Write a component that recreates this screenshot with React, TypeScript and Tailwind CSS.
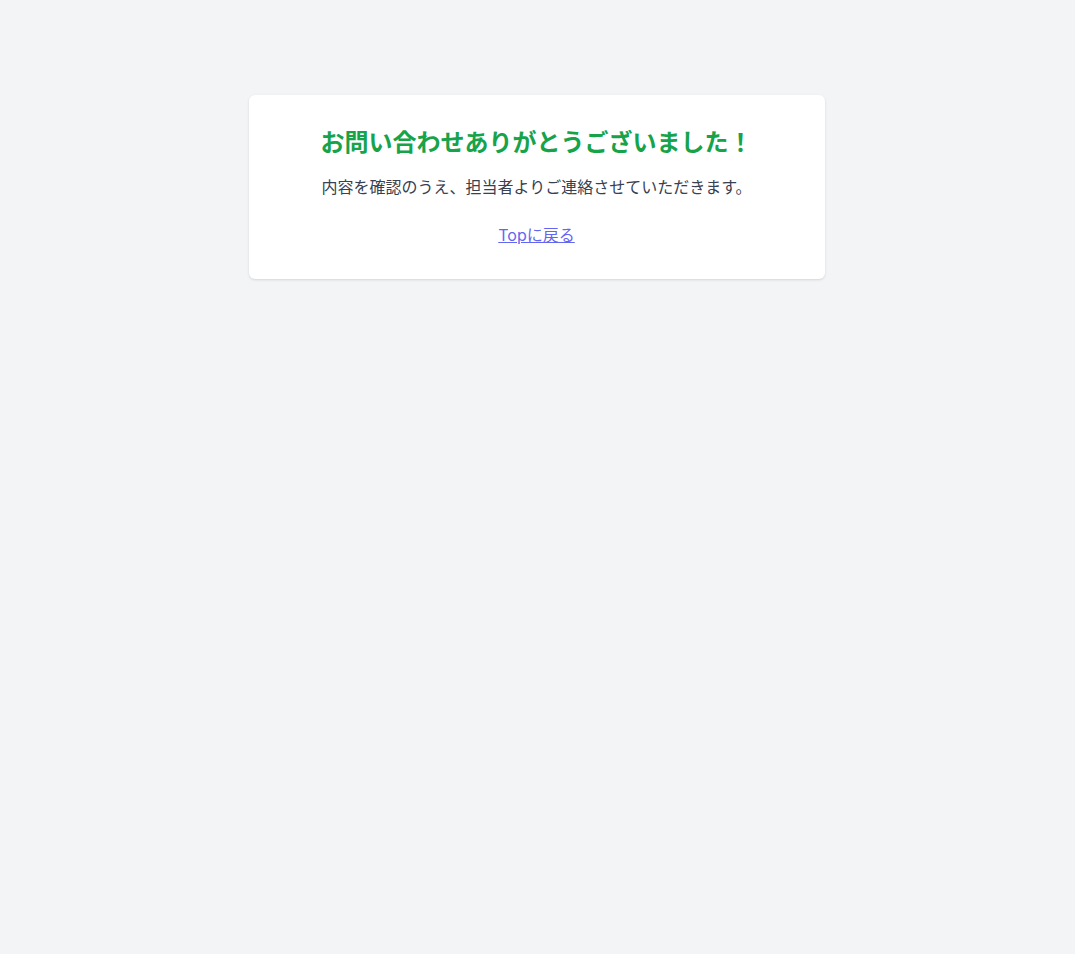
export default function App() {
  return (
    <div
      className="min-h-screen bg-[#f3f4f6] pt-[95px] px-4"
      style={{ fontFamily: '"Inter", "Noto Sans CJK JP", sans-serif' }}
    >
      <div className="mx-auto w-[576px] -translate-x-px bg-white rounded-md shadow-[0_1px_3px_0_rgba(0,0,0,0.1),0_1px_2px_-1px_rgba(0,0,0,0.1)] p-8 text-center">
        <h1 className="text-2xl font-bold text-[#16a34a] mb-4">お問い合わせありがとうございました！</h1>
        <p className="text-base text-[#374151]">内容を確認のうえ、担当者よりご連絡させていただきます。</p>
        <div className="mt-6">
          <a href="#" className="text-[#6366f1] underline">Topに戻る</a>
        </div>
      </div>
    </div>
  );
}
